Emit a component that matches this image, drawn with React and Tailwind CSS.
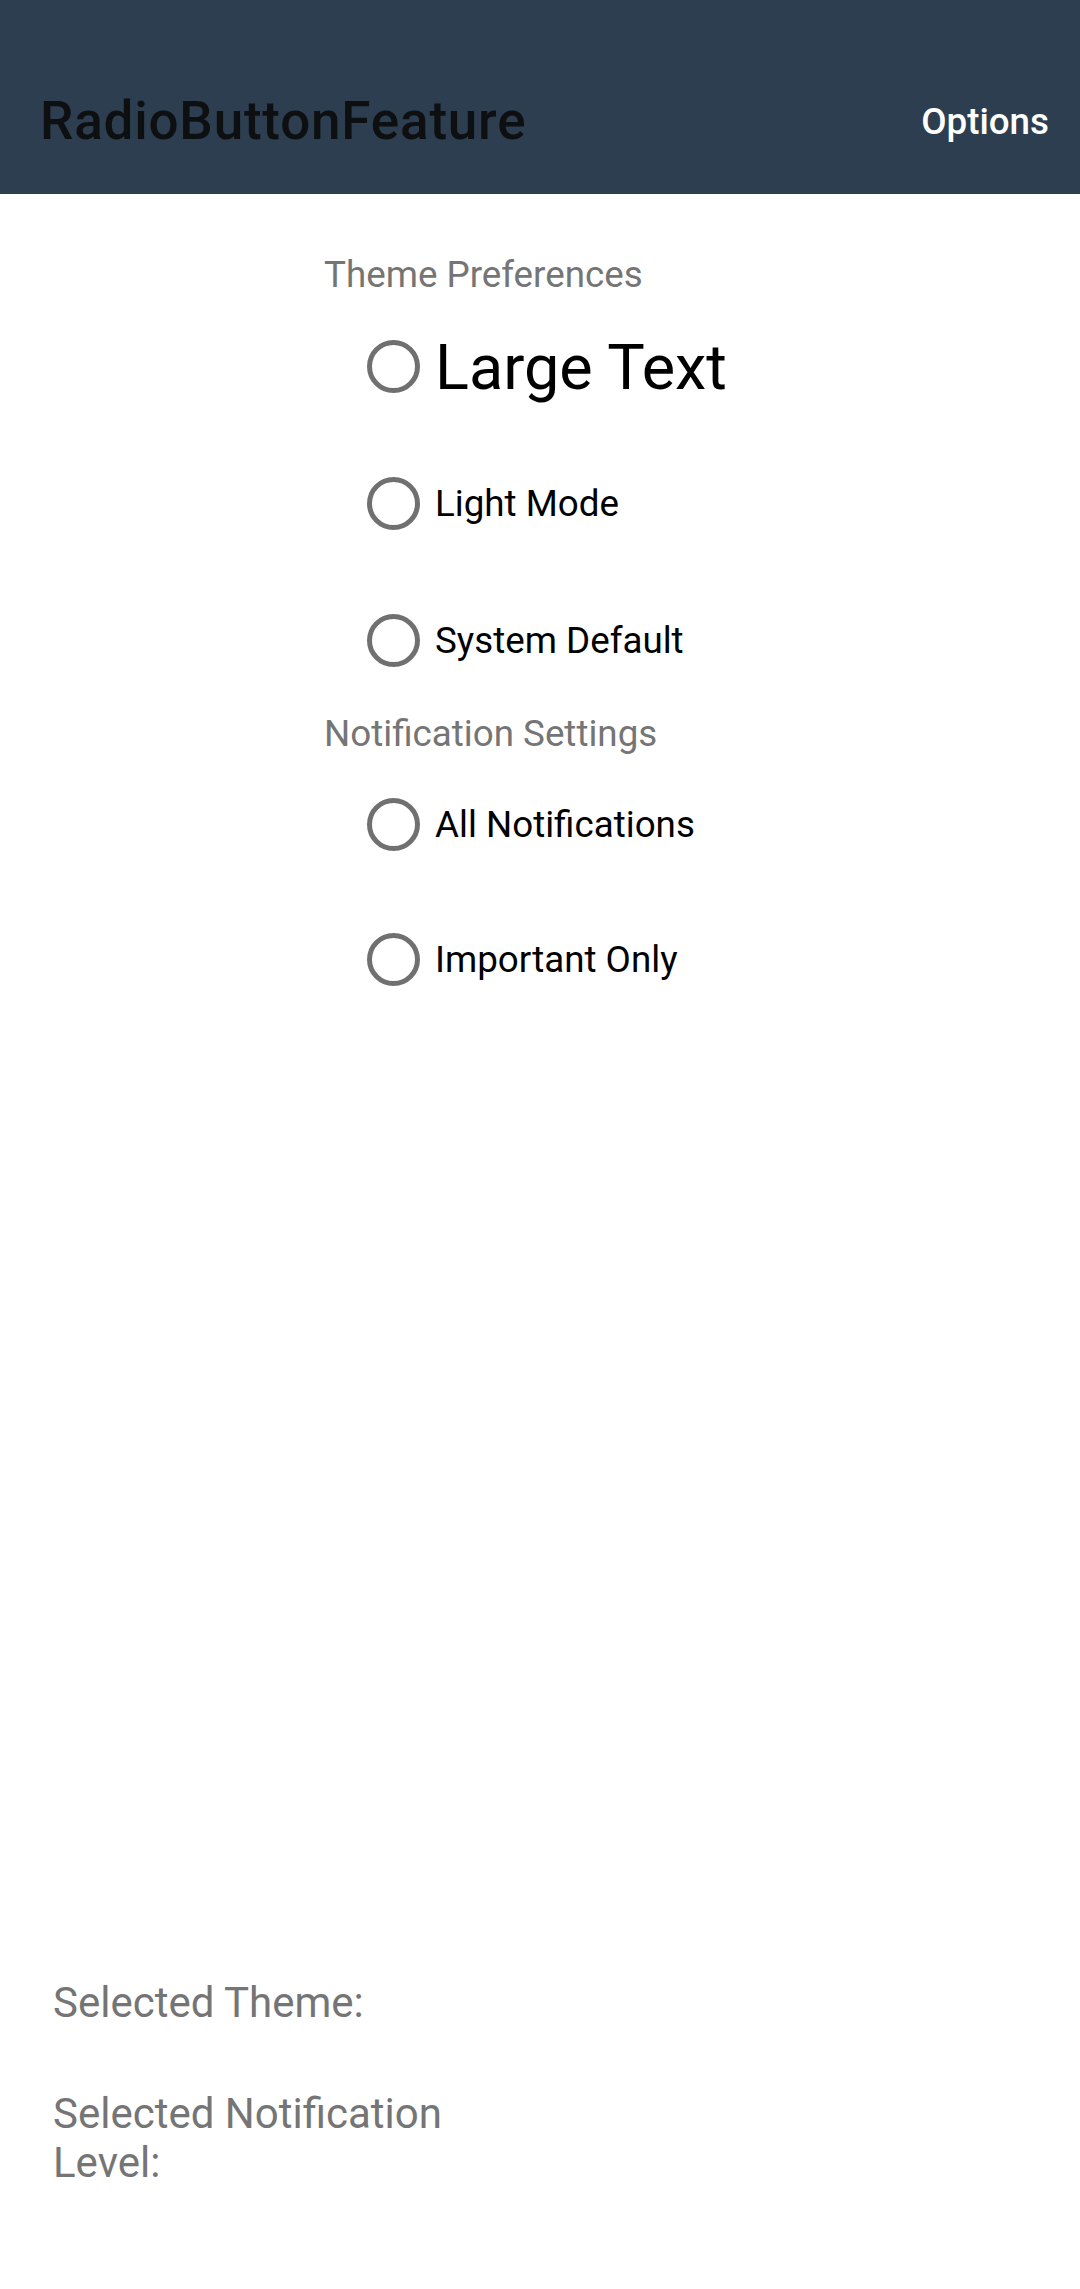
import React from "react";

function Radio({ label, big, tight }) {
  return (
    <div className={tight ? "flex h-[135px] items-center" : "flex h-[137px] items-center"}>
      <div className="h-[53px] w-[53px] shrink-0 rounded-full border-[5px] border-[#707070]" />
      <span
        className={
          big
            ? "ml-[15px] mt-[3px] text-[63px] leading-[74px] text-black"
            : "ml-[15px] text-[36.75px] leading-[43px] text-black"
        }
      >
        {label}
      </span>
    </div>
  );
}

export default function App() {
  return (
    <div className="flex h-[2289px] w-[1080px] flex-col bg-white font-['Roboto','Noto_Sans',sans-serif]">
      <header className="flex h-[194px] shrink-0 items-end justify-between bg-[#2c3e50] pb-[42px] pl-[40px] pr-[31px]">
        <h1 className="text-[53px] font-medium leading-[62px] tracking-[0.8px] text-[#0e0f11]">RadioButtonFeature</h1>
        <span className="mb-[9px] text-[36.75px] font-medium leading-[43px] text-white">Options</span>
      </header>

      <main className="flex flex-1 flex-col">
        <div className="mt-[59px] flex flex-col pl-[324px]">
          <div className="text-[36.75px] leading-[43px] text-[#757575]">Theme Preferences</div>
          <div className="mt-[2px] flex flex-col pl-[43px]">
            <Radio label="Large Text" big />
            <Radio label="Light Mode" />
            <Radio label="System Default" />
          </div>
          <div className="mt-[3px] text-[36.75px] leading-[43px] text-[#757575]">Notification Settings</div>
          <div className="mt-[2px] flex flex-col pl-[43px]">
            <Radio label="All Notifications" tight />
            <Radio label="Important Only" tight />
          </div>
        </div>

        <div className="flex-1" />

        <div className="flex flex-col pb-[102px] pl-[53px]">
          <div className="w-[460px] text-[42px] leading-[49px] text-[#757575]">Selected Theme:</div>
          <div className="mt-[62px] w-[460px] text-[42px] leading-[49px] text-[#757575]">
            Selected Notification Level:
          </div>
        </div>
      </main>
    </div>
  );
}
